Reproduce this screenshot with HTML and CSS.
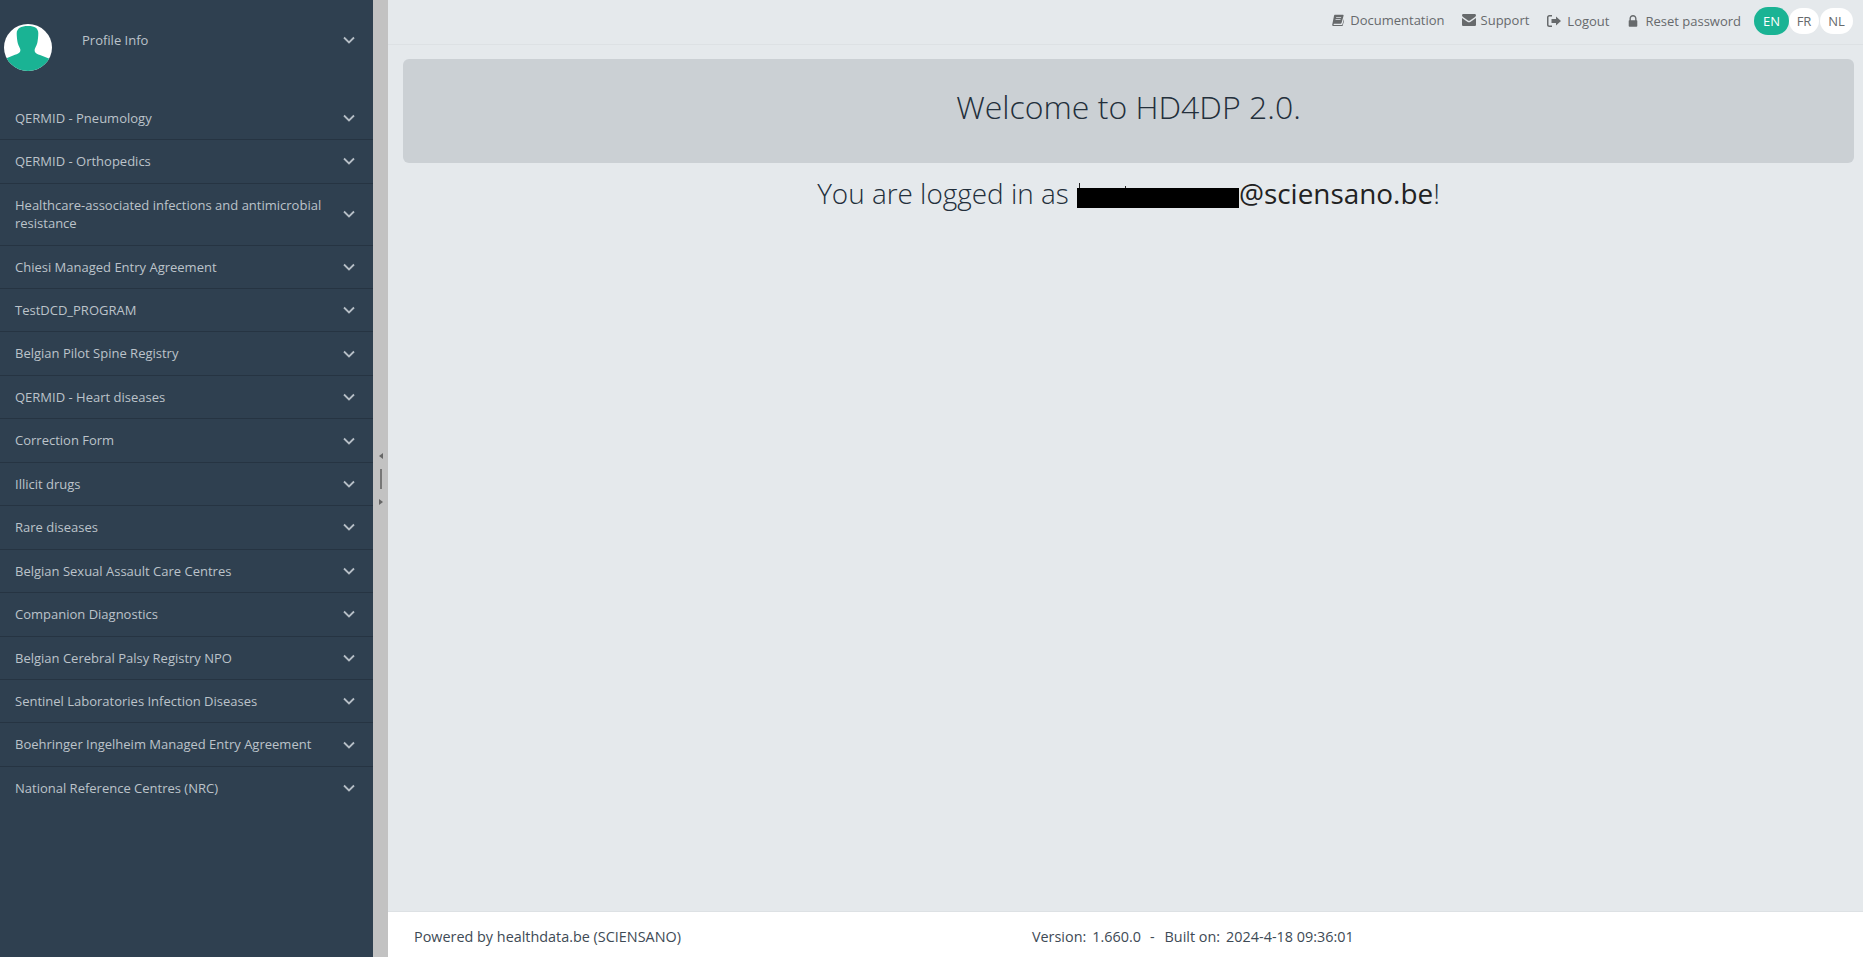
FILE: index.html
```html
<!DOCTYPE html>
<html lang="en">
<head>
<meta charset="utf-8">
<title>HD4DP 2.0</title>
<link rel="stylesheet" href="styles.css">
</head>
<body>
<aside class="sidebar">
  <div class="profile">
    <svg class="avatar" viewBox="0 0 48 48" preserveAspectRatio="none"><defs><clipPath id="c"><circle cx="24" cy="24" r="24"/></clipPath></defs><circle cx="24" cy="24" r="24" fill="#fff"/><g clip-path="url(#c)"><path fill="#1ab394" d="M24 2c7 0 10.300 2.500 10.300 7.500 0 3-.4 6.500-.8 9-.4 2.500-1.700 5-2.500 6.500-.5 1-.5 2.500 0 3.500.8 1.500 2.500 2.200 5 3.200l12 4.800v12H0V36l11-4.500c2.500-1 4.200-1.700 5-3.200.5-1 .5-2.500 0-3.300-.8-1.500-2.100-4-2.500-6.500-.4-2.500-.8-6-.8-9C12.700 4.500 17 2 24 2z"/></g></svg>
    <span class="profile-name">Profile Info</span>
    <svg class="chev" viewBox="0 0 12 8"><path d="M1 1.500l5 5 5-5"/></svg>
  </div>
  <nav class="menu">
    <a class="item"><span>QERMID - Pneumology</span><svg class="chev" viewBox="0 0 12 8"><path d="M1 1.500l5 5 5-5"/></svg></a>
    <a class="item"><span>QERMID - Orthopedics</span><svg class="chev" viewBox="0 0 12 8"><path d="M1 1.500l5 5 5-5"/></svg></a>
    <a class="item"><span>Healthcare-associated infections and antimicrobial resistance</span><svg class="chev" viewBox="0 0 12 8"><path d="M1 1.500l5 5 5-5"/></svg></a>
    <a class="item"><span>Chiesi Managed Entry Agreement</span><svg class="chev" viewBox="0 0 12 8"><path d="M1 1.500l5 5 5-5"/></svg></a>
    <a class="item"><span>TestDCD_PROGRAM</span><svg class="chev" viewBox="0 0 12 8"><path d="M1 1.500l5 5 5-5"/></svg></a>
    <a class="item"><span>Belgian Pilot Spine Registry</span><svg class="chev" viewBox="0 0 12 8"><path d="M1 1.500l5 5 5-5"/></svg></a>
    <a class="item"><span>QERMID - Heart diseases</span><svg class="chev" viewBox="0 0 12 8"><path d="M1 1.500l5 5 5-5"/></svg></a>
    <a class="item"><span>Correction Form</span><svg class="chev" viewBox="0 0 12 8"><path d="M1 1.500l5 5 5-5"/></svg></a>
    <a class="item"><span>Illicit drugs</span><svg class="chev" viewBox="0 0 12 8"><path d="M1 1.500l5 5 5-5"/></svg></a>
    <a class="item"><span>Rare diseases</span><svg class="chev" viewBox="0 0 12 8"><path d="M1 1.500l5 5 5-5"/></svg></a>
    <a class="item"><span>Belgian Sexual Assault Care Centres</span><svg class="chev" viewBox="0 0 12 8"><path d="M1 1.500l5 5 5-5"/></svg></a>
    <a class="item"><span>Companion Diagnostics</span><svg class="chev" viewBox="0 0 12 8"><path d="M1 1.500l5 5 5-5"/></svg></a>
    <a class="item"><span>Belgian Cerebral Palsy Registry NPO</span><svg class="chev" viewBox="0 0 12 8"><path d="M1 1.500l5 5 5-5"/></svg></a>
    <a class="item"><span>Sentinel Laboratories Infection Diseases</span><svg class="chev" viewBox="0 0 12 8"><path d="M1 1.500l5 5 5-5"/></svg></a>
    <a class="item"><span>Boehringer Ingelheim Managed Entry Agreement</span><svg class="chev" viewBox="0 0 12 8"><path d="M1 1.500l5 5 5-5"/></svg></a>
    <a class="item last"><span>National Reference Centres (NRC)</span><svg class="chev" viewBox="0 0 12 8"><path d="M1 1.500l5 5 5-5"/></svg></a>
  </nav>
</aside>
<div class="splitter">
  <i class="arrow arrow-left"></i>
  <i class="grip"></i>
  <i class="arrow arrow-right"></i>
</div>
<div class="main">
  <header class="topbar">
    <a class="link link-doc"><svg class="ico" viewBox="0 0 14 14"><path d="M3.200 1h9.600c.6 0 .9.500.7 1.100l-2.300 8.200c-.2.700-.7 1.100-1.400 1.100H2.400c-.5 0-.8.400-.6.800.1.300.4.500.8.500h8.900c.3 0 .5-.2.600-.4l2-6.700.4.500c.1.200.1.400 0 .7l-2.100 7c-.2.500-.7.900-1.200.9H2.300c-1 0-1.900-.8-2-1.900-.1-.5 0-.8.200-1.400L2.300 2.200C2.500 1.500 2.800 1 3.200 1zM5 3.500l-.3 1h5.800l.3-1H5zM4.300 5.800l-.3 1h5.800l.3-1H4.300z"/></svg>Documentation</a>
    <a class="link"><svg class="ico ico-wide" viewBox="0 0 14 12"><path d="M0 1.300C0 .6.600 0 1.300 0h11.400c.7 0 1.300.6 1.300 1.300 0 .7-.5 1.200-1 1.600L8 6.500c-.6.400-1.400.400-2 0L1 2.900C.5 2.500 0 2 0 1.300zM0 4l5.300 3.700c1 .7 2.400.7 3.400 0L14 4v6.700c0 .7-.6 1.300-1.300 1.300H1.300C.6 12 0 11.400 0 10.700V4z"/></svg>Support</a>
    <a class="link link-low"><svg class="ico ico-logout" viewBox="0 0 14 12"><path d="M5 0v1.500H2.500c-.6 0-1 .4-1 1v7c0 .6.400 1 1 1H5V12H2.300C1 12 0 11 0 9.700V2.300C0 1 1 0 2.300 0H5zM9 1.500L14 6l-5 4.500V8H4.500V4H9V1.500z"/></svg>Logout</a>
    <a class="link link-low link-last"><svg class="ico ico-lock" viewBox="0 0 12 14"><path d="M3.500 6H8.500V4.200C8.500 2.800 7.400 1.800 6 1.800S3.500 2.800 3.500 4.200V6zM11 6.800v6c0 .6-.4 1-1 1H2c-.6 0-1-.4-1-1v-6c0-.5.400-.8.800-.8h.1V4.200C1.900 1.900 3.700 0 6 0s4.100 1.900 4.100 4.200V6h.1c.4 0 .8.300.8.800z"/></svg>Reset password</a>
    <div class="langs">
      <span class="lang lang-on">EN</span>
      <span class="lang lang-fr">FR</span>
      <span class="lang lang-nl">NL</span>
    </div>
  </header>
  <main class="content">
    <div class="jumbo"><h1>Welcome to HD4DP 2.0.</h1></div>
    <p class="logged">You are logged in as <span class="mail"><span class="redact"><i class="tick tick-a"></i><i class="tick tick-b"></i></span>@sciensano.be</span>!</p>
  </main>
  <footer class="footer">
    <span class="powered">Powered by healthdata.be (SCIENSANO)</span>
    <span class="version">Version:<span class="v-num">1.660.0</span><span class="v-dash">-</span>Built on:<span class="v-date">2024-4-18 09:36:01</span></span>
  </footer>
</div>
</body>
</html>
```
FILE: styles.css
```css
* { box-sizing: border-box; }
html, body { height: 100%; }
body {
  margin: 0;
  display: flex;
  height: 957px;
  overflow: hidden;
  font-family: "Open Sans", sans-serif;
  font-size: 13px;
  line-height: 18.45px;
  color: #676a6c;
  background: #e5e9ec;
}
.sidebar {
  width: 373px;
  flex: none;
  background: #2f4050;
  color: #bcc3ca;
}
.profile {
  height: 96.7px;
  display: flex;
  align-items: flex-start;
  padding: 24px 18px 0 4px;
}
.avatar { width: 48px; height: 47px; flex: none; }
.profile-name { margin: 7px auto 0 30px; }
.profile .chev { margin-top: 12px; }
.item {
  display: flex;
  align-items: center;
  justify-content: space-between;
  padding: 12px 18px 12px 15px;
  border-bottom: 1px solid #263442;
}
.item span { max-width: 320px; }
.item.last { border-bottom: 0; }
.chev {
  width: 12px;
  height: 8px;
  flex: none;
  fill: none;
  stroke: #b6bec6;
  stroke-width: 1.8;
}
.splitter {
  width: 15px;
  flex: none;
  background: #c2c2c2;
  display: flex;
  flex-direction: column;
  align-items: center;
  justify-content: center;
}
.grip { width: 2px; height: 20px; margin: 10px 0; background: #777; }
.arrow { width: 0; height: 0; border-top: 3px solid transparent; border-bottom: 3px solid transparent; }
.arrow-left { border-right: 4px solid #666; }
.arrow-right { border-left: 4px solid #666; }
.main {
  flex: 1;
  min-width: 0;
  display: flex;
  flex-direction: column;
}
.topbar {
  height: 45px;
  flex: none;
  border-bottom: 1px solid #dde1e4;
  display: flex;
  align-items: flex-start;
  justify-content: flex-end;
  padding: 7px 10px 0 0;
  color: #676a6c;
}
.link {
  display: flex;
  align-items: center;
  margin-top: 4px;
  margin-right: 18px;
}
.link-doc { margin-right: 17px; }
.link-low { margin-top: 5px; }
.link-last { margin-right: 13px; }
.ico { width: 12px; height: 12px; margin-right: 6px; fill: #676a6c; flex: none; }
.ico-wide { width: 14px; margin-right: 5px; }
.ico-logout { width: 14px; margin-right: 6px; }
.ico-lock { width: 12px; margin-right: 6px; }
.langs { display: flex; align-items: center; }
.lang {
  height: 26px;
  line-height: 26px;
  text-align: center;
  background: #fff;
  border-radius: 13px;
}
.lang-on { width: 35px; height: 28px; line-height: 28px; border-radius: 14px; background: #1ab394; color: #fff; }
.lang-fr { width: 30px; }
.lang-nl { width: 33px; margin-left: 1px; }
.content {
  flex: 1;
  padding: 14px 9px 0 15px;
  text-align: center;
}
.jumbo {
  height: 104px;
  background: #cbd0d4;
  border-radius: 6px;
  display: flex;
  align-items: flex-start;
  justify-content: center;
  padding-top: 28px;
}
.jumbo h1 {
  margin: 0;
  font-size: 32px;
  line-height: 40px;
  font-weight: 300;
  color: #232f3b;
}
.logged {
  margin: 11px 0 0;
  font-size: 27.9px;
  line-height: 38px;
  font-weight: 300;
  color: #232f3b;
}
.mail { font-weight: 400; color: #222; }
.redact {
  position: relative;
  display: inline-block;
  width: 162px;
  height: 20px;
  margin-left: 1px;
  background: #000;
  vertical-align: -4px;
}
.tick {
  position: absolute;
  bottom: 100%;
  width: 1.500px;
  background: #222;
}
.tick-a { left: 2px; height: 5px; }
.tick-b { left: 48px; height: 2px; }
.footer {
  height: 46px;
  flex: none;
  background: #fff;
  border-top: 1px solid #dde1e4;
  display: flex;
  align-items: center;
  padding: 5px 0 0 26px;
  color: #3e4a55;
  font-size: 14.4px;
}
.version { margin-left: 351px; }
.v-num { margin-left: 6px; }
.v-dash { margin: 0 10px 0 9px; }
.v-date { margin-left: 6px; }
```
